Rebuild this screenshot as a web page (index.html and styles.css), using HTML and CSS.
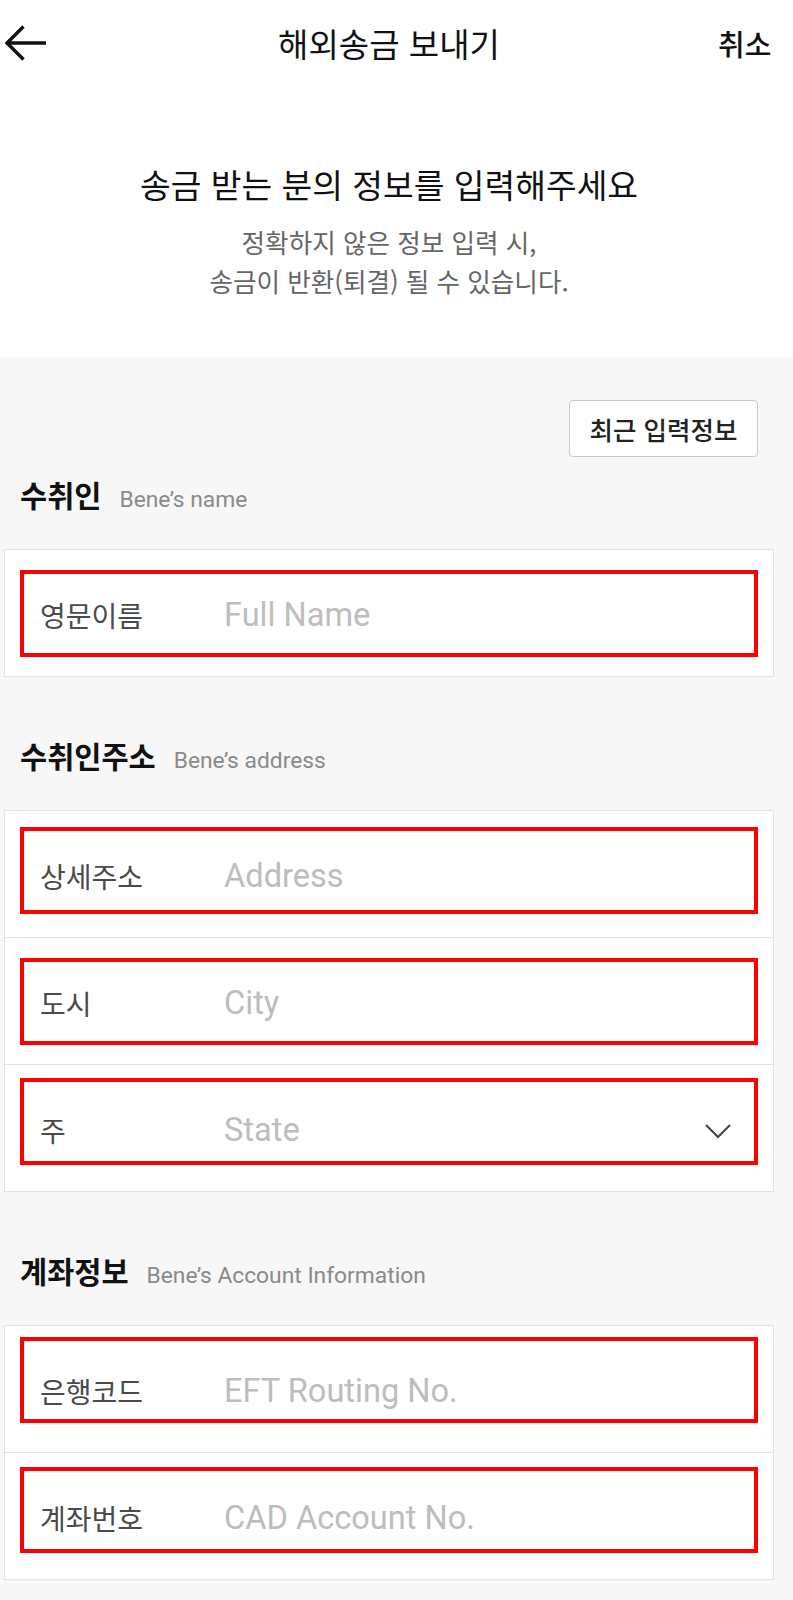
FILE: index.html
```html
<!DOCTYPE html>
<html lang="ko">
<head>
<meta charset="utf-8">
<title>해외송금 보내기</title>
<link rel="stylesheet" href="styles.css">
</head>
<body>
<div class="page">
  <header class="topbar">
    <button class="back" type="button" aria-label="뒤로">
      <svg width="44" height="40" viewBox="0 0 44 40" fill="none" stroke="#111" stroke-width="3.4" stroke-linecap="butt" stroke-linejoin="miter">
        <path d="M3 20H42"/>
        <path d="M19.5 3.5L3 20L19.5 36.5"/>
      </svg>
    </button>
    <h1 class="title">해외송금 보내기</h1>
    <span class="cancel">취소</span>
  </header>

  <section class="intro">
    <h2 class="intro-title">송금 받는 분의 정보를 입력해주세요</h2>
    <p class="intro-sub">정확하지 않은 정보 입력 시,<br>송금이 반환(퇴결) 될 수 있습니다.</p>
  </section>

  <main class="form">
    <div class="recent">
      <button class="recent-btn" type="button">최근 입력정보</button>
    </div>

    <section class="section">
      <div class="sec-title"><span class="sec-ko">수취인</span><span class="sec-en">Bene’s name</span></div>
      <div class="card">
        <div class="row">
          <span class="mark mark-20"></span>
          <span class="label">영문이름</span><span class="ph">Full Name</span>
        </div>
      </div>
    </section>

    <section class="section">
      <div class="sec-title"><span class="sec-ko">수취인주소</span><span class="sec-en">Bene’s address</span></div>
      <div class="card">
        <div class="row">
          <span class="mark mark-16"></span>
          <span class="label">상세주소</span><span class="ph">Address</span>
        </div>
        <div class="row">
          <span class="mark mark-20"></span>
          <span class="label">도시</span><span class="ph">City</span>
        </div>
        <div class="row">
          <span class="mark mark-13"></span>
          <span class="label">주</span><span class="ph">State</span>
          <svg class="chev" width="26" height="15" viewBox="0 0 26 15" fill="none" stroke="#444" stroke-width="2">
            <path d="M1 1L13 13L25 1"/>
          </svg>
        </div>
      </div>
    </section>

    <section class="section">
      <div class="sec-title"><span class="sec-ko">계좌정보</span><span class="sec-en">Bene’s Account Information</span></div>
      <div class="card">
        <div class="row">
          <span class="mark mark-11 mark-short"></span>
          <span class="label">은행코드</span><span class="ph">EFT Routing No.</span>
        </div>
        <div class="row">
          <span class="mark mark-14 mark-short"></span>
          <span class="label">계좌번호</span><span class="ph">CAD Account No.</span>
        </div>
      </div>
    </section>
  </main>
</div>
</body>
</html>
```

FILE: styles.css
```css
* { box-sizing: border-box; }

html, body {
  margin: 0;
  padding: 0;
  background: #ffffff;
}

body {
  font-family: Roboto, "Noto Sans CJK KR", "Noto Sans", sans-serif;
  color: #111;
}

.page {
  width: 793px;
  min-height: 1600px;
  background: #f7f7f7;
}

/* Top bar */
.topbar {
  height: 86px;
  display: flex;
  align-items: center;
  background: #fff;
}

.back {
  width: 60px;
  height: 86px;
  padding: 0 0 0 4px;
  margin: 0;
  border: 0;
  background: transparent;
  display: flex;
  align-items: center;
  justify-content: flex-start;
}

.title {
  flex: 1;
  margin: 0;
  text-align: center;
  font-family: "Noto Sans CJK KR", sans-serif;
  font-size: 33px;
  font-weight: 400;
  line-height: 40px;
  color: #111;
}

.cancel {
  width: 75px;
  padding-right: 22px;
  text-align: right;
  font-family: "Noto Sans CJK KR", sans-serif;
  font-size: 29px;
  font-weight: 500;
  line-height: 40px;
  color: #111;
  white-space: nowrap;
}

/* Intro */
.intro {
  background: #fff;
  padding: 78px 15px 57px 0;
  text-align: center;
}

.intro-title {
  margin: 0;
  font-family: "Noto Sans CJK KR", sans-serif;
  font-size: 33.4px;
  font-weight: 400;
  line-height: 40px;
  color: #111;
}

.intro-sub {
  margin: 18px 0 0;
  font-family: "Noto Sans CJK KR", sans-serif;
  font-size: 25.6px;
  line-height: 39px;
  color: #666;
}

/* Form area */
.form {
  background: #f7f7f7;
  padding: 43px 0 18px;
}

.recent {
  display: flex;
  justify-content: flex-end;
  padding-right: 35px;
}

.recent-btn {
  width: 189px;
  height: 57px;
  background: #fff;
  border: 1px solid #c9c9c9;
  border-radius: 4px;
  font-family: "Noto Sans CJK KR", sans-serif;
  font-size: 25.5px;
  font-weight: 500;
  color: #222;
  padding: 0;
}

.section {
  margin-top: 58px;
}

.section:first-of-type {
  margin-top: 17px;
}

.sec-title {
  height: 40px;
  display: flex;
  align-items: baseline;
  gap: 18px;
  padding-left: 20px;
  margin-bottom: 35px;
}

.sec-ko {
  font-family: "Noto Sans CJK KR", sans-serif;
  font-size: 29.5px;
  font-weight: 700;
  line-height: 40px;
  color: #111;
}

.sec-en {
  font-family: Roboto, sans-serif;
  font-size: 22.8px;
  line-height: 40px;
  color: #8a8a8a;
}

/* Card with rows */
.card {
  margin-left: 4px;
  width: 770px;
  background: #fff;
  border: 1px solid #e3e3e3;
}

.row {
  position: relative;
  height: 126px;
  display: flex;
  align-items: center;
  padding-left: 35px;
}

.row + .row {
  border-top: 1px solid #e3e3e3;
  height: 127px;
}

.label {
  width: 184px;
  flex: none;
  font-family: "Noto Sans CJK KR", sans-serif;
  font-size: 28px;
  line-height: 36px;
  color: #4a4a4a;
  padding-top: 4px;
}

.ph {
  font-family: Roboto, sans-serif;
  font-size: 32.6px;
  line-height: 40px;
  color: #bdbdbd;
  padding-top: 4px;
}

.chev {
  margin-left: auto;
  margin-right: 42px;
  margin-top: 6px;
}

/* Red annotation boxes laid over the fields */
.mark {
  position: absolute;
  left: 15px;
  width: 738px;
  height: 87px;
  border: 4px solid #ff0000;
}

.mark-short { height: 86px; }
.mark-11 { top: 11px; }
.mark-13 { top: 13px; }
.mark-14 { top: 14px; }
.mark-16 { top: 16px; }
.mark-20 { top: 20px; }
```
